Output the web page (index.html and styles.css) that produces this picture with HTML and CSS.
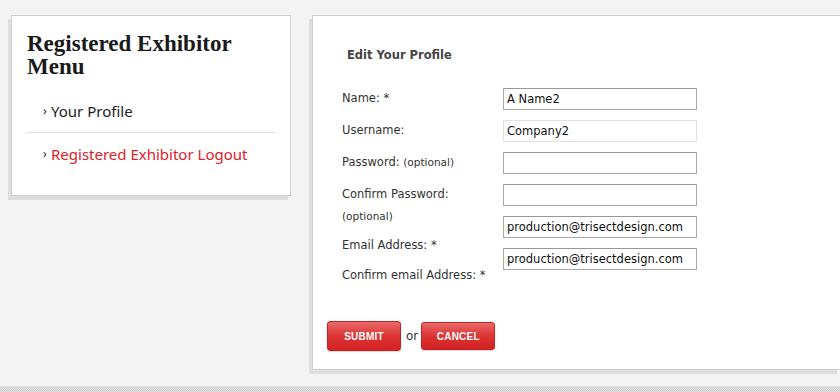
FILE: index.html
```html
<!DOCTYPE html>
<html>
<head>
<meta charset="utf-8">
<link rel="stylesheet" href="styles.css">
</head>
<body>
<div class="page">
  <aside class="menu-card">
    <h2 class="menu-title">Registered Exhibitor Menu</h2>
    <ul class="menu-list">
      <li class="menu-item"><span class="chev">›</span><a class="menu-link">Your Profile</a></li>
      <li class="menu-item"><span class="chev">›</span><a class="menu-link logout">Registered Exhibitor Logout</a></li>
    </ul>
  </aside>
  <main class="profile-card">
    <h3 class="profile-title">Edit Your Profile</h3>
    <div class="fields">
      <div class="labels">
        <div class="label">Name: *</div>
        <div class="label">Username:</div>
        <div class="label">Password: <small>(optional)</small></div>
        <div class="label confirm">Confirm Password:<br><small>(optional)</small></div>
        <div class="label email">Email Address: *</div>
        <div class="label">Confirm email Address: *</div>
      </div>
      <div class="inputs">
        <input class="field" type="text" value="A Name2">
        <input class="field readonly" type="text" value="Company2" readonly>
        <input class="field" type="password" value="">
        <input class="field" type="password" value="">
        <input class="field" type="text" value="production@trisectdesign.com">
        <input class="field" type="text" value="production@trisectdesign.com">
      </div>
    </div>
    <div class="actions">
      <button class="btn">SUBMIT</button>
      <span class="or">or</span>
      <button class="btn cancel">CANCEL</button>
    </div>
  </main>
</div>
<footer class="bottom-band"></footer>
</body>
</html>
```

FILE: styles.css
```css
html, body {
  margin: 0;
  padding: 0;
  background: #f3f3f3;
  overflow: hidden;
}

.page {
  display: flex;
  align-items: flex-start;
  gap: 21px;
  height: 386px;
  box-sizing: border-box;
  padding: 15px 0 0 11px;
}

.menu-card {
  width: 280px;
  height: 181px;
  box-sizing: border-box;
  background: #fff;
  border: 1px solid #cfcfcf;
  box-shadow: -3px 4px 0 #dedede;
  padding: 16px 15px 0 15px;
}

.menu-title {
  margin: 0;
  font-family: "Liberation Serif", serif;
  font-weight: bold;
  font-size: 23px;
  line-height: 23px;
  color: #1a1a1a;
}

.menu-list {
  list-style: none;
  margin: 12px 0 0 0;
  padding: 0;
}

.menu-item {
  display: flex;
  align-items: center;
  padding: 10px 0 10px 16px;
  line-height: 22px;
  font-family: "Noto Sans", sans-serif;
  font-size: 15px;
}

.menu-item + .menu-item {
  border-top: 1px solid #dcdcdc;
}

.chev {
  font-size: 12px;
  color: #222;
  width: 8px;
}

.menu-link {
  color: #222;
}

.menu-link.logout {
  color: #e0202a;
}

.profile-card {
  flex: 1;
  height: 355px;
  box-sizing: border-box;
  background: #fff;
  border: 1px solid #cfcfcf;
  border-right: none;
  box-shadow: -3px 4px 0 #dedede;
  padding: 31px 0 0 29px;
  font-family: "DejaVu Sans", sans-serif;
  color: #333;
}

.profile-title {
  margin: 0 0 0 5px;
  font-size: 11.5px;
  line-height: 16px;
  font-weight: bold;
  color: #444;
}

.fields {
  display: flex;
  margin-top: 24px;
}

.labels {
  width: 161px;
  font-size: 11.5px;
}

.label {
  line-height: 22px;
  margin-bottom: 10px;
  white-space: nowrap;
}

.label small {
  font-size: 10.5px;
}

.label.confirm {
  margin-bottom: 7px;
}

.label.email {
  margin-bottom: 8px;
}

.inputs {
  display: flex;
  flex-direction: column;
  gap: 10px;
  padding-top: 1px;
}

.field {
  width: 194px;
  height: 22px;
  box-sizing: border-box;
  margin: 0;
  border: 1px solid #aaa;
  border-top-color: #999;
  padding: 0 3px;
  font-family: "DejaVu Sans", sans-serif;
  font-size: 11.5px;
  color: #111;
  background: #fff;
}

.field.readonly {
  border-color: #e2e2e2;
}

.actions {
  display: flex;
  align-items: center;
  margin: 25px 0 0 -15px;
}

.btn {
  width: 74px;
  height: 30px;
  box-sizing: border-box;
  border: 1px solid #c72020;
  border-radius: 3px;
  background: linear-gradient(#e96a6a, #dc3333 50%, #d42222);
  color: #fff;
  font-family: "Liberation Sans", sans-serif;
  font-weight: bold;
  font-size: 10px;
  letter-spacing: 0.2px;
  padding: 0;
  box-shadow: 0 1px 1px rgba(0,0,0,0.15);
}

.btn.cancel {
  height: 28px;
}

.or {
  font-family: "DejaVu Sans", sans-serif;
  font-size: 12px;
  color: #333;
  margin: 0 3px 0 5px;
}

.bottom-band {
  height: 6px;
  border-top: 1px solid #e0e0e0;
  background: repeating-conic-gradient(#cfcfcf 0 25%, #e0e0e0 0 50%) 0 0 / 2px 2px;
}
```
